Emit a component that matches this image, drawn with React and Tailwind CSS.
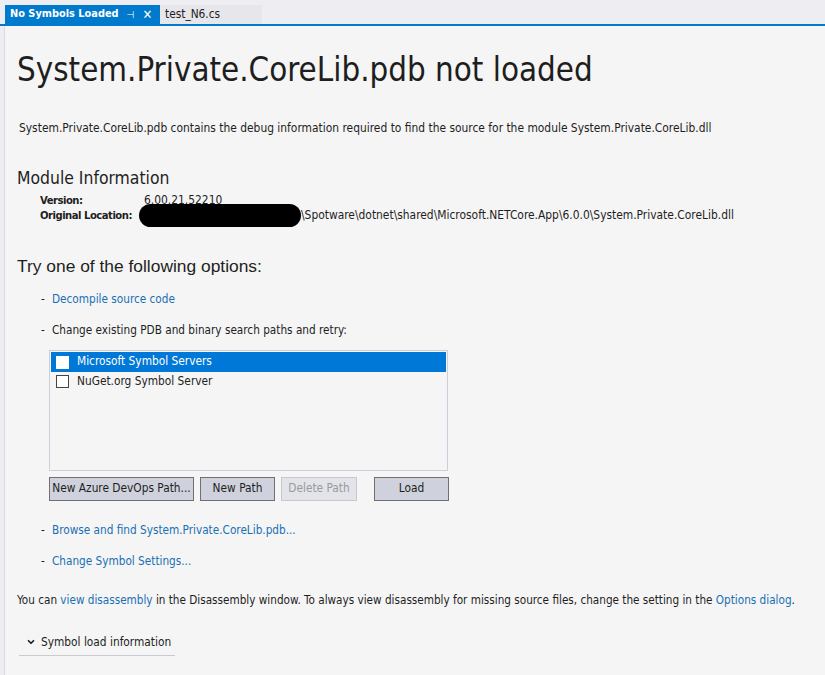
import { ChevronDown } from 'lucide-react'

const FONT = { fontFamily: '"DejaVu Sans Condensed", "Liberation Sans", sans-serif' }

function Bullet({ children }) {
  return (
    <div className="flex items-center pl-[24px] text-[11.7px] leading-[16px] text-[#1e1e1e] whitespace-nowrap">
      <span className="w-[11px]">-</span>
      {children}
    </div>
  )
}

function Link({ children }) {
  return <span className="text-[#1a6fb4]">{children}</span>
}

function Btn({ children, disabled, className = '' }) {
  return (
    <button
      type="button"
      className={`h-[24px] border text-[11.8px] whitespace-nowrap px-0 ${disabled ? 'border-[#c7c9d1] bg-[#e3e4ea] text-[#9a9a9a]' : 'border-[#707070] bg-[#cfd2dc] text-[#1e1e1e]'} ${className}`}
    >
      {children}
    </button>
  )
}

export default function App() {
  return (
    <div className="w-[825px] h-[675px] bg-[#f5f5f5] overflow-hidden" style={FONT}>
      <div className="h-[26px] bg-[#eeeef2] flex items-end border-b-2 border-[#007acc] pl-[5px]">
        <div className="h-[19px] w-[155px] bg-[#007acc] flex items-center pl-[5px] text-white text-[10.9px] font-bold whitespace-nowrap">
          <span>No Symbols Loaded</span>
          <span className="ml-[8px] text-[10px] font-normal">⊣</span>
          <span className="ml-[8px] text-[13px] font-normal">✕</span>
        </div>
        <div className="h-[19px] w-[102px] bg-[#e6e6eb] flex items-center pl-[5px] text-[11.8px] text-[#1e1e1e]">test_N6.cs</div>
      </div>
      <div className="flex h-[649px]">
        <div className="w-[5px] bg-[#eeeef2] border-r border-[#dadae0]" />
        <div className="flex-1 pl-[12px]">
          <h1 className="mt-[24px] text-[32.8px] leading-[40px] font-light text-[#1e1e1e] whitespace-nowrap">System.Private.CoreLib.pdb not loaded</h1>
          <p className="mt-[30px] ml-[2px] text-[11.9px] leading-[16px] text-[#1e1e1e] whitespace-nowrap">
            System.Private.CoreLib.pdb contains the debug information required to find the source for the module System.Private.CoreLib.dll
          </p>
          <h2 className="mt-[31px] text-[17.4px] leading-[22px] font-light text-[#1e1e1e]">Module Information</h2>
          <div className="mt-[4px] ml-[23px] text-[11.9px] leading-[15px] text-[#1e1e1e] whitespace-nowrap">
            <div className="flex">
              <span className="w-[104px] font-bold text-[11.2px] tracking-[-0.5px]">Version:</span>
              <span>6.00.21.52210</span>
            </div>
            <div className="flex items-center h-[15px]">
              <span className="w-[99px] shrink-0 font-bold text-[11.2px] tracking-[-0.5px]">Original Location:</span>
              <span className="w-[162px] h-[23px] shrink-0 rounded-full bg-black" />
              <span>\Spotware\dotnet\shared\Microsoft.NETCore.App\6.0.0\System.Private.CoreLib.dll</span>
            </div>
          </div>
          <h2 className="mt-[32px] text-[17.4px] leading-[22px] text-[#1e1e1e]" style={{ fontFamily: '"Liberation Sans", sans-serif' }}>Try one of the following options:</h2>
          <div className="mt-[14px]">
            <Bullet><Link>Decompile source code</Link></Bullet>
          </div>
          <div className="mt-[15px]">
            <Bullet>Change existing PDB and binary search paths and retry:</Bullet>
          </div>
          <div className="ml-[32px] mt-[12px] w-[399px] h-[121px] border border-[#cccedb] bg-[#f5f5f5] p-[1px] text-[11.8px]">
            <div className="h-[20px] bg-[#0078d7] flex items-center pl-[5px] text-white">
              <span className="w-[13px] h-[13px] bg-white border border-white mr-[8px]" />
              Microsoft Symbol Servers
            </div>
            <div className="h-[19px] flex items-center pl-[5px] text-[#1e1e1e]">
              <span className="w-[13px] h-[13px] bg-white border border-[#444] mr-[8px]" />
              NuGet.org Symbol Server
            </div>
          </div>
          <div className="ml-[32px] mt-[6px] flex">
            <Btn className="w-[145px]">New Azure DevOps Path...</Btn>
            <Btn className="w-[75px] ml-[6px]">New Path</Btn>
            <Btn disabled className="w-[76px] ml-[6px]">Delete Path</Btn>
            <Btn className="w-[75px] ml-[17px]">Load</Btn>
          </div>
          <div className="mt-[21px]">
            <Bullet><Link>Browse and find System.Private.CoreLib.pdb...</Link></Bullet>
          </div>
          <div className="mt-[15px]">
            <Bullet><Link>Change Symbol Settings...</Link></Bullet>
          </div>
          <p className="mt-[23px] text-[11.65px] leading-[16px] text-[#1e1e1e] whitespace-nowrap">
            You can <Link>view disassembly</Link> in the Disassembly window. To always view disassembly for missing source files, change the setting in the <Link>Options dialog</Link>.
          </p>
          <div className="mt-[26px] ml-[2px] w-[156px] h-[22px] border-b border-[#c9cad3] flex items-start text-[11.8px] leading-[16px] text-[#1e1e1e] whitespace-nowrap">
            <ChevronDown size={10} strokeWidth={4} className="ml-[7px] mr-[5px] mt-[3px]" />
            Symbol load information
          </div>
        </div>
      </div>
    </div>
  )
}
